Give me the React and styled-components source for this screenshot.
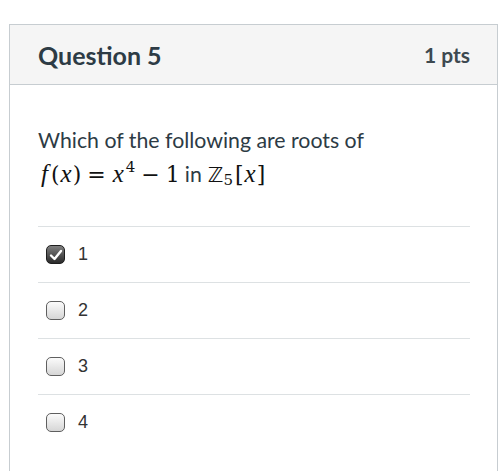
import React from "react";
import styled, { createGlobalStyle } from "styled-components";

const GlobalStyle = createGlobalStyle`
  body {
    margin: 0;
    background: #ffffff;
    font-family: Lato, "Open Sans", sans-serif;
  }
`;

const Page = styled.div`
  padding: 24px 4px 0 9px;
  height: 471px;
  box-sizing: border-box;
  overflow: hidden;
`;

const Card = styled.div`
  border: 1px solid #c7cdd1;
  border-bottom: none;
  height: 100%;
  box-sizing: border-box;
`;

const Header = styled.div`
  display: flex;
  justify-content: space-between;
  align-items: center;
  height: 59px;
  padding: 0 27px 0 28px;
  background: #f5f5f5;
  border-bottom: 1px solid #c7cdd1;
`;

const Title = styled.div`
  font-size: 25px;
  font-weight: 700;
  color: #2d3b45;
`;

const Points = styled.div`
  font-size: 21px;
  font-weight: 700;
  color: #3d4950;
`;

const Body = styled.div`
  padding: 38px 27px 0 28px;
`;

const Prompt = styled.div`
  font-size: 21.3px;
  line-height: 34px;
  color: #2d3b45;
  padding-bottom: 32px;
  border-bottom: 1px solid #dde1e3;
`;

const Math = styled.span`
  display: inline-flex;
  align-items: baseline;
  font-family: "DejaVu Serif", "Liberation Serif", serif;
  font-size: 22px;
  color: #111;
`;

const Var = styled.span`
  font-family: "Liberation Serif", serif;
  font-style: italic;
  font-size: 25px;
  margin: 0 ${(p) => p.$gap ?? 1}px;
`;

const Op = styled.span`
  margin: 0 6px;
`;

const Sup = styled.span`
  font-size: 15px;
  position: relative;
  top: -10px;
  margin-left: 1px;
`;

const Sub = styled.span`
  font-size: 15px;
  position: relative;
  top: 3px;
  margin-right: 2px;
`;

const Word = styled.span`
  margin: 0 6px 0 5px;
`;

const Blackboard = styled.span`
  font-family: "DejaVu Sans", sans-serif;
  font-size: 21px;
`;

const Answers = styled.ul`
  list-style: none;
  margin: 0;
  padding: 0;
`;

const Answer = styled.li`
  display: flex;
  align-items: center;
  height: 55px;
  padding-left: 8px;
  border-bottom: ${(p) => (p.$last ? "none" : "1px solid #dde1e3")};
`;

const Box = styled.span`
  width: 19px;
  height: 19px;
  border-radius: 5px;
  box-sizing: border-box;
  border: 1px solid ${(p) => (p.$checked ? "#1e1e1e" : "#5f5f5f")};
  background: ${(p) =>
    p.$checked
      ? "linear-gradient(#808080, #2a2a2a)"
      : "linear-gradient(#fbfbfb, #d6d6d6)"};
  display: flex;
  align-items: center;
  justify-content: center;
  margin-right: 13px;
`;

const Label = styled.span`
  font-family: "Liberation Sans", Arial, sans-serif;
  font-size: 18px;
  color: #333;
`;

const Check = () => (
  <svg width="14" height="12" viewBox="0 0 14 12">
    <path
      d="M2 6.5 L5.5 10 L12 2"
      fill="none"
      stroke="#fff"
      strokeWidth="2.4"
      strokeLinecap="round"
      strokeLinejoin="round"
    />
  </svg>
);

const options = ["1", "2", "3", "4"];

export default function App() {
  return (
    <>
      <GlobalStyle />
      <Page>
        <Card>
          <Header>
            <Title>Question 5</Title>
            <Points>1 pts</Points>
          </Header>
          <Body>
            <Prompt>
              Which of the following are roots of
              <br />
              <Math>
                <Var $gap={3}>f</Var>(<Var>x</Var>)<Op>=</Op>
                <Var>x</Var>
                <Sup>4</Sup>
                <Op>−</Op>1
              </Math>
              <Word>in</Word>
              <Math>
                <Blackboard>ℤ</Blackboard>
                <Sub>5</Sub>[<Var>x</Var>]
              </Math>
            </Prompt>
            <Answers>
              {options.map((o, i) => (
                <Answer key={o} $last={i === options.length - 1}>
                  <Box $checked={i === 0}>{i === 0 && <Check />}</Box>
                  <Label>{o}</Label>
                </Answer>
              ))}
            </Answers>
          </Body>
        </Card>
      </Page>
    </>
  );
}
